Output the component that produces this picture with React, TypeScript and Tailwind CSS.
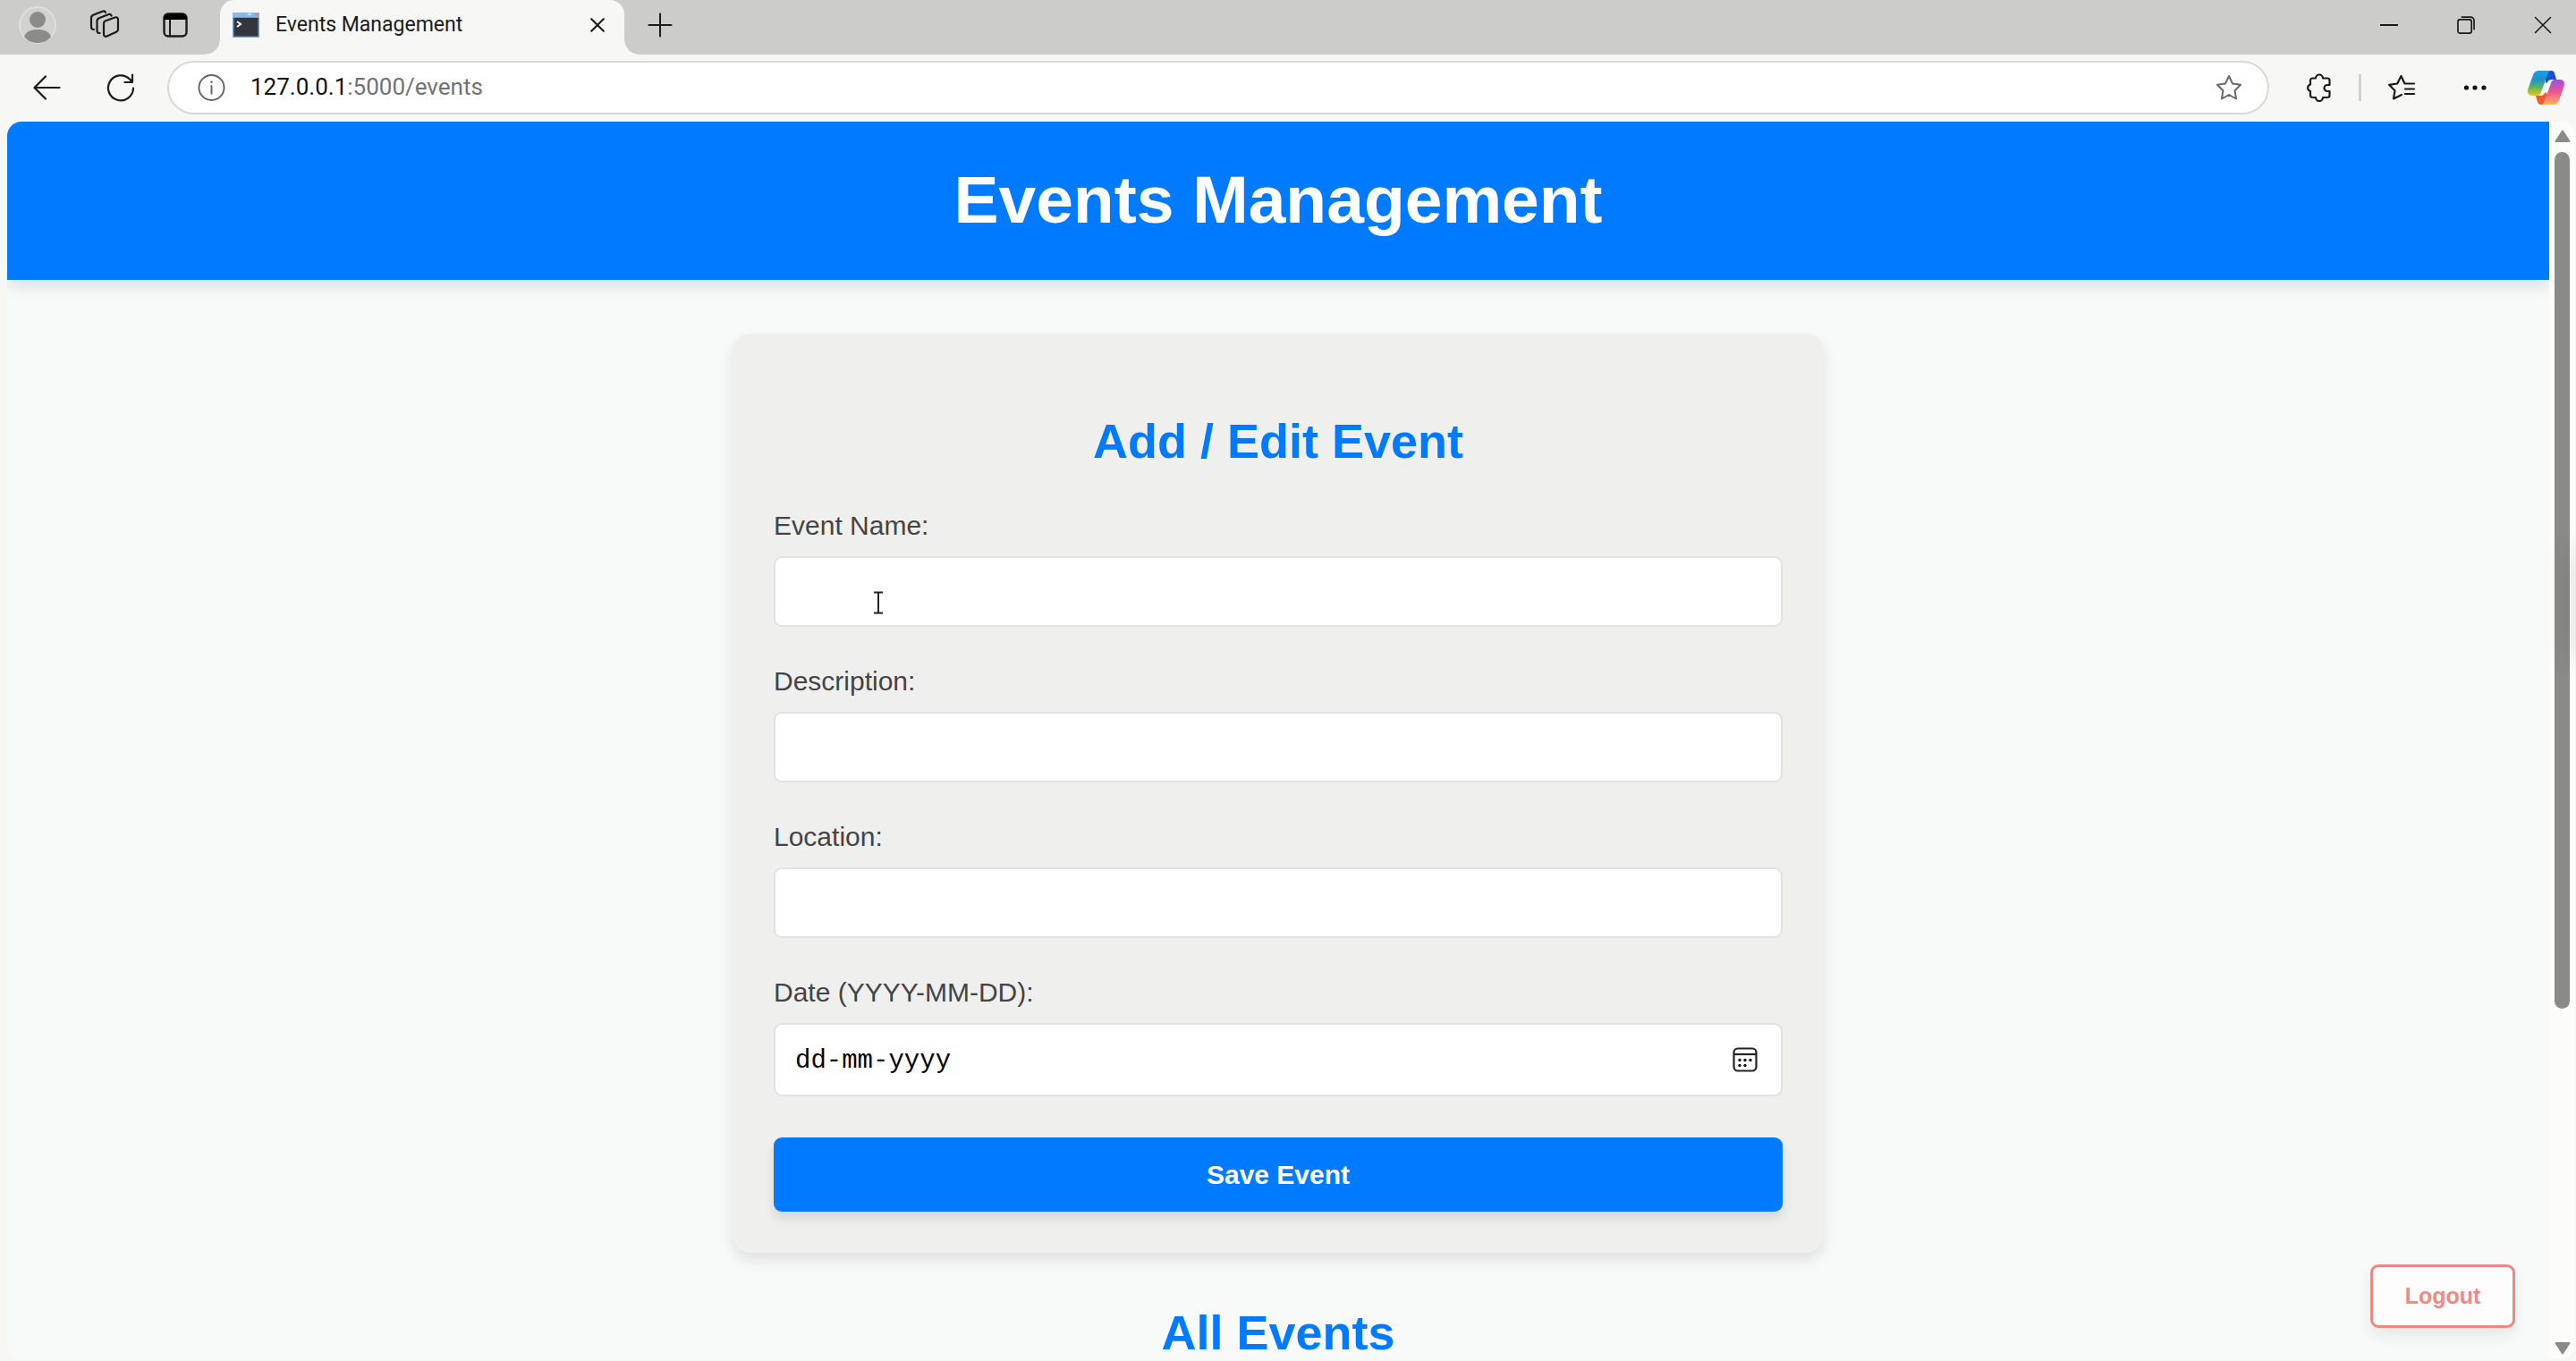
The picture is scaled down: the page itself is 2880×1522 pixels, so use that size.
import React from "react";

const ink = "#1b1b1b";

function AvatarIcon() {
  return (
    <svg width="44" height="44" viewBox="0 0 44 44" aria-hidden="true">
      <circle cx="22" cy="22" r="20" fill="#d2d3cf" stroke="#dfe0dc" strokeWidth="2" />
      <circle cx="22" cy="16" r="9" fill="#8b8c89" />
      <path d="M7 35c2-6 8-8 15-8s13 2 15 8c-4 5-9 7-15 7s-11-2-15-7z" fill="#8b8c89" />
    </svg>
  );
}

function WorkspacesIcon() {
  return (
    <svg width="34" height="34" viewBox="0 0 34 34" fill="none" stroke={ink} strokeWidth="2.2" strokeLinejoin="round" strokeLinecap="round" aria-hidden="true">
      <path d="M17.500 12.500l11-4c2-.7 3.500.3 3.500 2.300v11c0 1.600-.8 2.500-2 3l-10.500 4.700c-2 .8-3.500-.2-3.500-2.300V15.500c0-1.500.4-2.500 1.500-3z" />
      <path d="M11.500 26c-2 .2-3-1-3-2.700V12.500c0-1.600.8-2.600 2.200-3.200L21 5.200c1.600-.6 3 0 3.600 1.300" />
      <path d="M5 22c-2 0-3-1-3-2.700V9c0-1.600.8-2.600 2.200-3.200L14.500 1.700c1.600-.6 3 0 3.500 1.200" />
    </svg>
  );
}

function TabActionsIcon() {
  return (
    <svg width="28" height="28" viewBox="0 0 28 28" aria-hidden="true">
      <rect x="1.500" y="1.500" width="25" height="25" rx="4.500" fill="none" stroke={ink} strokeWidth="2.400" />
      <path d="M1.500 8V5.500a4 4 0 0 1 4-4h17a4 4 0 0 1 4 4V8z" fill="#000" />
      <path d="M8 8v18" stroke={ink} strokeWidth="2" />
    </svg>
  );
}

function TerminalIcon() {
  return (
    <svg width="30" height="28" viewBox="0 0 30 28" aria-hidden="true">
      <rect x="0" y="0" width="30" height="28" rx="1" fill="#6f9cd6" />
      <rect x="0" y="0" width="30" height="5" fill="#8fb8e8" />
      <rect x="17" y="1" width="4" height="2" fill="#c8dcf4" />
      <rect x="25" y="1" width="4" height="3" fill="#d48a92" />
      <rect x="1.500" y="6" width="27" height="20.500" fill="#33373b" />
      <path d="M5 10l4 3-4 3" fill="none" stroke="#f2f2f2" strokeWidth="2" />
    </svg>
  );
}

function Cross({ size, width }: { size: number; width: number }) {
  return (
    <svg width={size} height={size} viewBox="0 0 20 20" fill="none" stroke={ink} strokeWidth={width} strokeLinecap="round" aria-hidden="true">
      <path d="M1.500 1.500l17 17M18.500 1.500l-17 17" />
    </svg>
  );
}

function CopilotIcon() {
  return (
    <svg width="43" height="40" viewBox="-1 -1 43 40" aria-hidden="true">
      <defs>
        <linearGradient id="cpLeft" x1="0" y1="0" x2="0" y2="1">
          <stop offset="0" stopColor="#16a0e6" />
          <stop offset="0.350" stopColor="#1f8fd0" />
          <stop offset="0.650" stopColor="#55b565" />
          <stop offset="1" stopColor="#f5c40c" />
        </linearGradient>
        <linearGradient id="cpRight" x1="0" y1="1" x2="0" y2="0">
          <stop offset="0" stopColor="#9b50e6" />
          <stop offset="0.500" stopColor="#ee5590" />
          <stop offset="1" stopColor="#ffb257" />
        </linearGradient>
      </defs>
      <path d="M20 0h6c3 0 4 2 4.500 4.500L32 10h-5c-3 0-4 1-5 3l-2 1z" fill="#1b4fd0" />
      <path d="M21 38h-6c-3 0-4-2-4.500-4.500L9 28h5c3 0 4-1 5-3l2-1z" fill="#ee5a34" />
      <path id="ribbon" d="M13 0H27c-3 0-4 2-5 5L15 24c-1 3-2 4-5 4H5C1 28-1 25 .5 20L6 5C7 2 9 0 13 0z" fill="url(#cpLeft)" />
      <path d="M13 0H27c-3 0-4 2-5 5L15 24c-1 3-2 4-5 4H5C1 28-1 25 .5 20L6 5C7 2 9 0 13 0z" fill="url(#cpRight)" transform="rotate(180 20.500 19)" />
    </svg>
  );
}

function TitleBar() {
  return (
    <div className="flex h-[61px] shrink-0 items-stretch bg-[#cccdca] font-[Roboto,sans-serif]">
      <div className="flex w-[246px] shrink-0 items-center pb-[5px] pl-5">
        <button aria-label="Profile" className="w-[44px]"><AvatarIcon /></button>
        <button aria-label="Workspaces" className="ml-9"><WorkspacesIcon /></button>
        <button aria-label="Tab actions" className="ml-12"><TabActionsIcon /></button>
      </div>
      <div className="relative flex w-[452px] shrink-0 items-center rounded-t-[16px] bg-[#f7f7f6] pb-[5px] pl-[14px] pr-[22px]">
        <span className="absolute -left-4 bottom-0 size-4 bg-[radial-gradient(circle_at_0_0,transparent_15px,#f7f7f6_16px)]" />
        <span className="absolute -right-4 bottom-0 size-4 bg-[radial-gradient(circle_at_100%_0,transparent_15px,#f7f7f6_16px)]" />
        <TerminalIcon />
        <span className="ml-[18px] flex-1 whitespace-nowrap text-[23px] text-[#1b1b1b]">Events Management</span>
        <button aria-label="Close tab"><Cross size={16} width={2.6} /></button>
      </div>
      <button aria-label="New tab" className="ml-[26px] pb-[6px]">
        <svg width="28" height="28" viewBox="0 0 28 28" stroke={ink} strokeWidth="2" strokeLinecap="round" aria-hidden="true">
          <path d="M14 1.500v25M1.500 14h25" />
        </svg>
      </button>
      <div className="ml-auto flex items-center gap-[66px] pb-[5px] pr-[27px]">
        <button aria-label="Minimize">
          <svg width="20" height="20" viewBox="0 0 20 20" stroke={ink} strokeWidth="2" aria-hidden="true"><path d="M0 10h20" /></svg>
        </button>
        <button aria-label="Restore">
          <svg width="20" height="20" viewBox="0 0 21 21" fill="none" stroke={ink} strokeWidth="1.800" aria-hidden="true">
            <rect x="1" y="4" width="16" height="16" rx="2.500" />
            <path d="M5 1.200h11a4 4 0 0 1 4 4V16" />
          </svg>
        </button>
        <button aria-label="Close window"><Cross size={20} width={1.6} /></button>
      </div>
    </div>
  );
}

const star = "M15 2l4 8.500 9 1.300-6.500 6.400 1.600 9.300L15 23l-8.100 4.500 1.600-9.300L2 11.800l9-1.300z";

function Toolbar() {
  return (
    <div className="flex h-[75px] shrink-0 items-center bg-[#f7f7f6] pb-[2px] pl-[37px] pr-3 font-[Roboto,sans-serif]">
      <button aria-label="Back">
        <svg width="31" height="28" viewBox="0 0 31 28" fill="none" stroke={ink} strokeWidth="2.200" strokeLinecap="round" strokeLinejoin="round" aria-hidden="true">
          <path d="M29.500 14H2M14 1.500L1.500 14 14 26.500" />
        </svg>
      </button>
      <button aria-label="Refresh" className="ml-[51px]">
        <svg width="32" height="32" viewBox="0 0 32 32" fill="none" stroke={ink} strokeWidth="2.200" strokeLinecap="round" strokeLinejoin="round" aria-hidden="true">
          <path d="M30 16.500A14 14 0 1 1 26 6.500l2.500 3M29 1.500v8.500h-8.500" />
        </svg>
      </button>
      <div className="ml-[36px] flex h-[60px] flex-1 items-center rounded-full border-2 border-[#d8d8d6] bg-white pl-[32px] pr-7">
        <svg width="31" height="32" viewBox="0 0 32 32" fill="none" stroke="#666" strokeWidth="2" aria-hidden="true">
          <circle cx="16" cy="16" r="14.500" />
          <path d="M16 14v9" strokeLinecap="round" />
          <circle cx="16" cy="9.500" r="1.300" fill="#666" stroke="none" />
        </svg>
        <div aria-label="Address" className="ml-[28px] flex-1 whitespace-nowrap text-[26px] text-[#727272]">
          <span className="text-[#111]">127.0.0.1</span>:5000/events
        </div>
        <button aria-label="Add to favorites">
          <svg width="30" height="30" viewBox="0 0 30 30" fill="none" stroke="#6a6a6a" strokeWidth="2" strokeLinejoin="round" aria-hidden="true"><path d={star} /></svg>
        </button>
      </div>
      <button aria-label="Extensions" className="ml-[41px]">
        <svg width="28" height="32" viewBox="0 0 28 32" fill="none" stroke={ink} strokeWidth="2.200" strokeLinejoin="round" aria-hidden="true">
          <path d="M7.500 5.500H11a4 4 0 0 1 8 0h5c1.500 0 2.500 1 2.500 2.500V13H24a3.500 3.500 0 0 0 0 7h2.500v4.500c0 1.500-1 2.500-2.500 2.500h-5a4 4 0 0 1-8 0H7.500C6 27 5 26 5 24.500V20a3.900 3.900 0 0 1 0-7.500V8c0-1.500 1-2.500 2.500-2.500z" />
        </svg>
      </button>
      <span className="ml-[31px] h-[30px] w-[3px] bg-[#d2d2d0]" />
      <button aria-label="Favorites" className="ml-[29px]">
        <svg width="32" height="30" viewBox="0 0 32 30" fill="none" stroke={ink} strokeWidth="2.200" strokeLinejoin="round" strokeLinecap="round" aria-hidden="true">
          <path d="M30 10.500H19.500L15.500 2l-4.300 8.500-9.200 1.300 6.500 6.400-1.500 9.300 9-4.500M20 16.500h10M20 22h10" />
        </svg>
      </button>
      <button aria-label="Settings and more" className="ml-[53px]">
        <svg width="26" height="8" viewBox="0 0 26 8" fill="#111" aria-hidden="true">
          <circle cx="3.500" cy="4" r="2.600" /><circle cx="13" cy="4" r="2.600" /><circle cx="23" cy="4" r="2.600" />
        </svg>
      </button>
      <button aria-label="Copilot" className="ml-[45px]"><CopilotIcon /></button>
    </div>
  );
}

const inputClass = "block h-[79px] w-full rounded-[9px] border-2 border-[#e2e2e1] bg-white px-6 text-[30px] outline-none";

function Field({ id, label, children }: { id: string; label: string; children?: React.ReactNode }) {
  return (
    <div className="mb-11">
      <label htmlFor={id} className="mb-[17px] block text-[30px] leading-[34px] text-[#444]">{label}</label>
      {children ?? <input id={id} type="text" className={inputClass} />}
    </div>
  );
}

function TextCursor() {
  return (
    <svg width="12" height="26" viewBox="0 0 12 26" fill="none" stroke="#222" strokeWidth="2" className="pointer-events-none absolute left-[111px] top-[39px]" aria-hidden="true">
      <path d="M1 1.500h10M6 1.500v23M1 24.500h10" />
    </svg>
  );
}

function EventForm() {
  return (
    <form onSubmit={(e) => e.preventDefault()} className="mx-auto mt-[60px] w-full max-w-[1220px] rounded-[20px] bg-[#eff0ee] p-[46px] shadow-[0_8px_16px_rgba(0,0,0,0.1)]">
      <h2 className="mb-[47px] mt-[43px] text-center text-[54px] font-bold leading-[62px] text-[#007bff]">Add / Edit Event</h2>
      <Field id="name" label="Event Name:">
        <div className="relative">
          <input id="name" type="text" className={inputClass} />
          <TextCursor />
        </div>
      </Field>
      <Field id="description" label="Description:" />
      <Field id="location" label="Location:" />
      <Field id="date" label="Date (YYYY-MM-DD):">
        <div className="flex h-[82px] items-center rounded-[9px] border-2 border-[#e2e2e1] bg-white pl-[22px] pr-[26px]">
          <input id="date" type="text" defaultValue="dd-mm-yyyy" className="min-w-0 flex-1 bg-transparent pt-1 font-['Liberation_Mono',monospace] text-[29px] text-black outline-none" />
          <button type="button" aria-label="Choose date">
            <svg width="28" height="28" viewBox="0 0 28 28" fill="none" stroke="#222" strokeWidth="2.200" aria-hidden="true">
              <rect x="1.500" y="1.500" width="25" height="25" rx="4.500" />
              <path d="M1.500 8h25" />
              <g fill="#111" stroke="none">
                <circle cx="8" cy="14.500" r="1.700" /><circle cx="14" cy="14.500" r="1.700" /><circle cx="20" cy="14.500" r="1.700" />
                <circle cx="8" cy="20.500" r="1.700" /><circle cx="14" cy="20.500" r="1.700" />
              </g>
            </svg>
          </button>
        </div>
      </Field>
      <button type="submit" className="mt-[46px] block h-[83px] w-full rounded-[9px] bg-[#007bff] text-[30px] font-bold text-white shadow-[0_8px_12px_rgba(0,0,0,0.1)]">Save Event</button>
    </form>
  );
}

function ScrollBar() {
  return (
    <div className="flex w-[29px] shrink-0 flex-col items-center bg-[#fcfcfa] pb-[5px] pt-[9px]" aria-hidden="true">
      <svg width="18" height="15" viewBox="0 0 18 15"><path d="M9 1.500L16.500 13h-15z" fill="#8a8a8a" stroke="#8a8a8a" strokeWidth="2" strokeLinejoin="round" /></svg>
      <div className="mt-[10px] flex w-[17px] flex-1 flex-col">
        <div className="h-[72%] rounded-full bg-[#8a8a8a]" />
      </div>
      <svg width="18" height="15" viewBox="0 0 18 15"><path d="M9 13.500L1.500 2h15z" fill="#8a8a8a" stroke="#8a8a8a" strokeWidth="2" strokeLinejoin="round" /></svg>
    </div>
  );
}

export default function App() {
  return (
    <div className="relative flex h-screen flex-col overflow-hidden bg-[#f7f7f6]">
      <TitleBar />
      <Toolbar />
      <div className="mb-[2px] ml-2 mr-px flex min-h-0 flex-1 overflow-hidden rounded-[16px] bg-[#f8faf9] font-['Liberation_Sans',Arial,sans-serif]">
        <main className="relative min-w-0 flex-1 overflow-hidden">
          <header className="flex h-[177px] items-center justify-center bg-[#007bff] pb-1 shadow-[0_8px_16px_rgba(0,0,0,0.1)]">
            <h1 className="text-[75px] font-bold leading-[86px] text-white">Events Management</h1>
          </header>
          <EventForm />
          <h2 className="mt-[58px] text-center text-[54px] font-bold leading-[62px] text-[#007bff]">All Events</h2>
          <button className="absolute bottom-[35px] right-[38px] h-[71px] w-[162px] rounded-[9px] border-[3px] border-[#ed8782] bg-[#fdfdfd] text-[25px] font-bold text-[#ec8b86] shadow-[0_8px_16px_rgba(0,0,0,0.08)]">Logout</button>
        </main>
        <ScrollBar />
      </div>
      <div className="absolute -right-1 top-[620px] h-[110px] w-1 rounded-full shadow-[0_0_30px_8px_rgba(0,0,0,0.12)]" />
    </div>
  );
}
